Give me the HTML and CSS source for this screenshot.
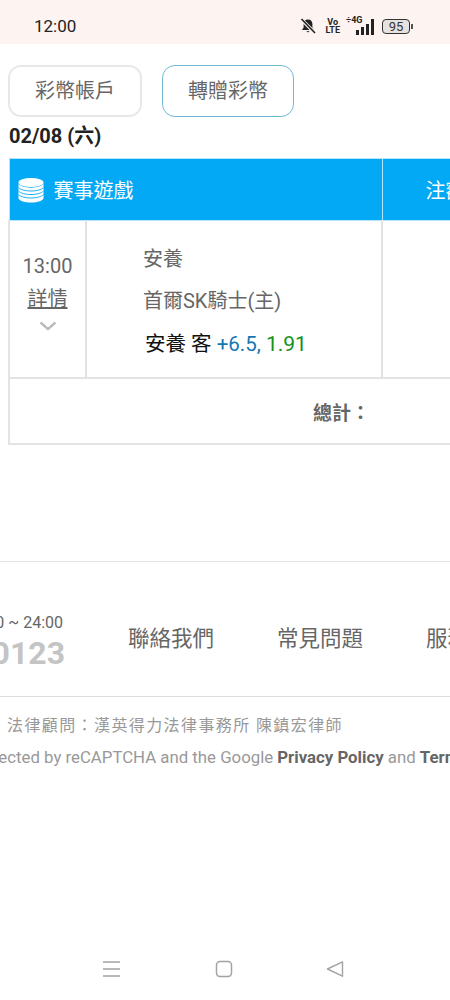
FILE: index.html
```html
<!DOCTYPE html>
<html lang="zh-Hant">
<head>
    <meta charset="UTF-8">
    <meta name="viewport" content="width=device-width, initial-scale=1.0">
    <title>轉贈彩幣</title>
    <link rel="stylesheet" href="styles.css">
</head>
<body>
    <div class="status-bar">
        <span class="clock">12:00</span>
        <div class="status-icons">
            <svg class="icon-bell" width="18" height="18" viewBox="0 0 18 18">
                <path d="M9 2.500c-2.800 0-4.400 2-4.400 4.600v3.400L3 13h12l-1.600-2.500V7.100C13.400 4.500 11.800 2.500 9 2.500z" fill="#222"/>
                <path d="M7.400 14.200a1.700 1.700 0 0 0 3.200 0z" fill="#222"/>
                <path d="M2.500 2.500l13 13" stroke="#fdf3f0" stroke-width="3.400"/>
                <path d="M2.500 2l13.500 14" stroke="#222" stroke-width="1.600"/>
            </svg>
            <div class="volte"><span>Vo</span><span>LTE</span></div>
            <div class="signal">
                <span class="signal-label">÷4G</span>
                <div class="signal-bars">
                    <i class="bar-1"></i><i class="bar-2"></i><i class="bar-3"></i><i class="bar-4"></i>
                </div>
            </div>
            <div class="battery"><span class="battery-body">95</span><i class="battery-tip"></i></div>
        </div>
    </div>

    <div class="tabs">
        <a class="tab">彩幣帳戶</a>
        <a class="tab tab-active">轉贈彩幣</a>
    </div>
    <div class="date">02/08 (六)</div>

    <table class="bets">
        <colgroup>
            <col class="col-time-w">
            <col class="col-match-w">
            <col class="col-amount-w">
        </colgroup>
        <tr class="bets-head">
            <th colspan="2">
                <div class="head-game">
                    <svg width="26" height="26" viewBox="0 0 26 26">
                        <ellipse cx="13" cy="5.500" rx="12.500" ry="4.500" fill="#fff"/>
                        <path d="M.5 6v15c0 2.500 5.600 4.500 12.500 4.500S25.500 23.500 25.500 21V6c0 2.500-5.600 4.700-12.500 4.700S.5 8.500.5 6z" fill="#fff"/>
                        <g fill="none" stroke="#03a9f4" stroke-width=".9">
                            <path d="M.5 10.500c2 2.200 6.800 3.500 12.500 3.500s10.500-1.300 12.500-3.500"/>
                            <path d="M.5 14c2 2.200 6.800 3.500 12.500 3.500s10.500-1.300 12.500-3.500"/>
                            <path d="M.5 17.500c2 2.200 6.800 3.500 12.500 3.500s10.500-1.300 12.500-3.500"/>
                        </g>
                    </svg>
                    <span>賽事遊戲</span>
                </div>
            </th>
            <th class="col-amount">注額</th>
        </tr>
        <tr class="bets-row">
            <td class="col-time">
                <div class="time">13:00</div>
                <a class="detail">詳情</a>
                <svg class="chevron" width="18" height="10" viewBox="0 0 18 10">
                    <path d="M1.500 1.500L9 8l7.500-6.500" fill="none" stroke="#bdbdbd" stroke-width="2.500"/>
                </svg>
            </td>
            <td class="col-match">
                <div class="team">安養</div>
                <div class="team">首爾SK騎士(主)</div>
                <div class="pick">安養 客 <span class="line">+6.5,</span> <span class="odds">1.91</span></div>
            </td>
            <td class="col-amount"></td>
        </tr>
        <tr class="bets-total">
            <td colspan="3"><span>總計：</span></td>
        </tr>
    </table>

    <div class="footer">
        <div class="footer-links">
            <div class="hotline">
                <span class="hotline-time">0 ~ 24:00</span>
                <span class="hotline-num">0123</span>
            </div>
            <a>聯絡我們</a>
            <a>常見問題</a>
            <a>服務條款</a>
        </div>
        <div class="legal">
            <div class="legal-lawyer">法律顧問：漢英得力法律事務所 陳鎮宏律師</div>
            <div class="legal-captcha">This site is protected by reCAPTCHA and the Google <b>Privacy Policy</b> and <b>Terms of Service</b> apply.</div>
        </div>
    </div>

    <div class="nav-bar">
        <svg width="20" height="18" viewBox="0 0 20 18">
            <path d="M2 2h17M2 9h17M2 16h17" stroke="#a3a3a3" stroke-width="1.500"/>
        </svg>
        <svg width="18" height="18" viewBox="0 0 18 18">
            <rect x="1.500" y="1.500" width="15" height="15" rx="3.500" fill="none" stroke="#a3a3a3" stroke-width="1.500"/>
        </svg>
        <svg width="18" height="18" viewBox="0 0 18 18">
            <path d="M16.500 1.800v14.400L1.500 9z" fill="none" stroke="#a3a3a3" stroke-width="1.400" stroke-linejoin="round"/>
        </svg>
    </div>
</body>
</html>
```

FILE: styles.css
```css
html, body {
    margin: 0;
    padding: 0;
}

body {
    width: 450px;
    height: 1000px;
    overflow: hidden;
    display: flex;
    flex-direction: column;
    background-color: #fff;
    color: #666;
    font-family: Roboto, "Noto Sans CJK TC", sans-serif;
}

.status-bar {
    height: 44px;
    flex-shrink: 0;
    display: flex;
    align-items: center;
    justify-content: space-between;
    padding: 8px 37px 0 34px;
    box-sizing: border-box;
    background-color: #fdf3f0;
}

.clock {
    font-size: 17px;
    color: #222;
}

.status-icons {
    display: flex;
    align-items: center;
}

.icon-bell {
    margin-right: 8px;
}

.volte {
    display: flex;
    flex-direction: column;
    margin-right: 6px;
    font-size: 9px;
    font-weight: 700;
    line-height: 8px;
    color: #222;
    text-align: center;
}

.signal {
    display: flex;
    align-items: flex-end;
    justify-content: flex-end;
    position: relative;
    width: 28px;
    height: 17px;
    margin-right: 8px;
}

.signal-label {
    position: absolute;
    top: -3px;
    left: 0;
    font-size: 9px;
    font-weight: 700;
    color: #222;
    white-space: nowrap;
}

.signal-bars {
    display: flex;
    align-items: flex-end;
    gap: 2px;
}

.signal-bars i {
    display: block;
    width: 3px;
    background-color: #222;
}

.bar-1 { height: 5px; }
.bar-2 { height: 8px; }
.bar-3 { height: 11px; }
.bar-4 { height: 16px; }

.battery {
    display: flex;
    align-items: center;
}

.battery-body {
    width: 26px;
    height: 13px;
    border: 1px solid #333;
    border-radius: 4px;
    background-color: #e6e2e0;
    font-size: 13px;
    line-height: 13px;
    text-align: center;
    color: #333;
}

.battery-tip {
    display: block;
    width: 2px;
    height: 5px;
    margin-left: 1px;
    background-color: #555;
}

.tabs {
    display: flex;
    gap: 20px;
    padding: 21px 0 0 8px;
}

.tab {
    width: 134px;
    height: 52px;
    box-sizing: border-box;
    border: 2px solid #e8e8e8;
    border-radius: 13px;
    font-size: 20px;
    line-height: 48px;
    text-align: center;
    color: #666;
}

.tab-active {
    width: 132px;
    border: 1px solid #6fb9d3;
    line-height: 50px;
}

.date {
    margin: 7px 0 0 9px;
    font-size: 20px;
    font-weight: 700;
    line-height: 24px;
    color: #222;
}

.bets {
    width: 620px;
    flex-shrink: 0;
    margin: 10px 0 0 8px;
    border-collapse: collapse;
    table-layout: fixed;
}

.col-time-w {
    width: 77px;
}

.col-match-w {
    width: 296px;
}

.bets-head th {
    height: 61px;
    padding: 0;
    background-color: #03a9f4;
    border: 1px solid #b3e5fc;
    font-size: 20px;
    font-weight: 400;
    color: #fff;
}

.head-game {
    display: flex;
    align-items: center;
    gap: 10px;
    padding-left: 8px;
}

.head-game svg {
    flex-shrink: 0;
}

.bets-head .col-amount {
    text-align: left;
    padding-left: 43px;
}

.bets-row td {
    height: 156px;
    padding: 0;
    border: 2px solid #e3e3e3;
    border-top: 0;
}

.col-time {
    text-align: center;
}

.bets-row .col-time {
    vertical-align: top;
}

.time {
    margin-top: 33px;
    font-size: 20px;
    line-height: 24px;
}

.detail {
    display: block;
    margin-top: 8px;
    font-size: 20px;
    line-height: 26px;
    text-decoration: underline;
}

.chevron {
    display: block;
    margin: 9px auto 0;
}

.bets-row .col-match {
    padding-left: 56px;
    vertical-align: top;
}

.team {
    margin-top: 20px;
    font-size: 20px;
    line-height: 22px;
}

.team:first-child {
    margin-top: 27px;
}

.pick {
    margin: 19px 0 0 2px;
    font-size: 20.5px;
    line-height: 26px;
    color: #111;
    white-space: nowrap;
}

.line {
    color: #1476b4;
}

.odds {
    color: #12911b;
    font-size: 21px;
}

.bets-total td {
    height: 64px;
    padding: 0 0 0 303px;
    border: 2px solid #e3e3e3;
    border-top: 0;
    font-size: 19px;
    font-weight: 700;
}

.footer {
    margin-top: 116px;
    border-top: 1px solid #e3e3e3;
}

.footer-links {
    display: flex;
    align-items: center;
    height: 135px;
    box-sizing: border-box;
    padding-top: 14px;
    border-bottom: 1px solid #ddd;
    white-space: nowrap;
}

.footer-links a {
    flex-shrink: 0;
    font-size: 21.5px;
    margin-left: 63px;
}

.hotline {
    flex-shrink: 0;
    width: 65px;
    margin-top: 14px;
    display: flex;
    flex-direction: column;
    align-items: flex-end;
}

.hotline-time {
    padding-right: 2px;
    font-size: 16px;
    line-height: 20px;
}

.hotline-num {
    font-size: 32px;
    font-weight: 700;
    line-height: 40px;
    color: #c4c4c4;
}

.legal {
    padding-top: 18px;
    color: #999;
    white-space: nowrap;
}

.legal-lawyer {
    padding-left: 7px;
    font-size: 16px;
    line-height: 22px;
    letter-spacing: 1.4px;
}

.legal-captcha {
    margin: 9px 0 0 -116px;
    font-size: 16.8px;
    line-height: 22px;
}

.legal-captcha b {
    color: #666;
}

.nav-bar {
    margin-top: auto;
    height: 40px;
    flex-shrink: 0;
    display: flex;
    align-items: flex-start;
    justify-content: space-between;
    padding: 0 106px 0 101px;
    box-sizing: border-box;
}
```
